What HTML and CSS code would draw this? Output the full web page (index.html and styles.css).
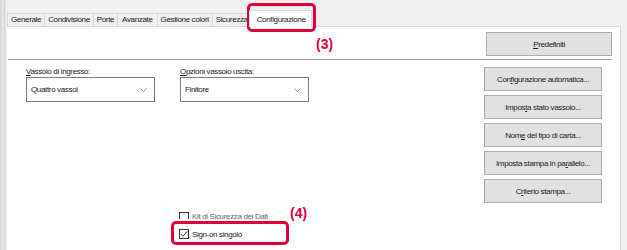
FILE: index.html
```html
<!DOCTYPE html>
<html lang="it">
<head>
    <meta charset="UTF-8">
    <title>Configurazione</title>
    <link rel="stylesheet" href="styles.css">
</head>
<body>
<div class="screen">
    <div class="edge"></div>
    <div class="sheet">
        <div class="tabs">
            <div class="tab">Generale</div>
            <div class="tab">Condivisione</div>
            <div class="tab">Porte</div>
            <div class="tab tab-mid">Avanzate</div>
            <div class="tab">Gestione colori</div>
            <div class="tab tab-cut">Sicurezza</div>
            <div class="tab active">Configurazione</div>
        </div>

        <div class="panel">
            <div class="head">
                <button class="btn btn-wide"><u>P</u>redefiniti</button>
            </div>

            <div class="body">
                <div class="left">
                    <div class="selects">
                        <div class="field">
                            <label class="label"><u>V</u>assoio di ingresso:</label>
                            <div class="select">
                                <span>Quattro vassoi</span>
                                <svg width="7" height="4" viewBox="0 0 7 4"><polyline points="0.5,0.5 3.5,3.5 6.5,0.5" fill="none" stroke="#8a8a8a" stroke-width="1"/></svg>
                            </div>
                        </div>
                        <div class="field">
                            <label class="label"><u>O</u>pzioni vassoio uscita:</label>
                            <div class="select">
                                <span>Finitore</span>
                                <svg width="7" height="4" viewBox="0 0 7 4"><polyline points="0.5,0.5 3.5,3.5 6.5,0.5" fill="none" stroke="#8a8a8a" stroke-width="1"/></svg>
                            </div>
                        </div>
                    </div>

                    <div class="checks">
                        <div class="check check-cut">
                            <span class="box"></span>
                            <span class="dim">Kit di Sicurezza dei Dati</span>
                        </div>
                        <div class="check">
                            <span class="box">
                                <svg width="8" height="8" viewBox="0 0 8 8"><polyline points="0.8,4 3,6.3 7.3,1.2" fill="none" stroke="#333" stroke-width="1"/></svg>
                            </span>
                            <span>Sign-on singolo</span>
                        </div>
                    </div>
                </div>

                <div class="right">
                    <button class="btn">Con<u>f</u>igurazione automatica...</button>
                    <button class="btn">Impos<u>t</u>a stato vassoio...</button>
                    <button class="btn">Nom<u>e</u> del tipo di carta...</button>
                    <button class="btn">Imposta stampa in pa<u>r</u>allelo...</button>
                    <button class="btn">C<u>r</u>iterio stampa...</button>
                </div>
            </div>
        </div>
    </div>

    <!-- annotazioni -->
    <div class="mark mark-tab"></div>
    <div class="num num-3">(3)</div>
    <div class="mark mark-check"></div>
    <div class="num num-4">(4)</div>
</div>
</body>
</html>
```

FILE: styles.css
```css
body { margin: 0; background: #f0f0f0; font-family: "Liberation Sans", Arial, sans-serif; font-size: 8px; letter-spacing: -0.35px; color: #1a1a1a; }
.screen { position: relative; display: flex; width: 627px; height: 250px; overflow: hidden; }
.edge { width: 7px; background: linear-gradient(to right, #cfcfcf 0, #dedede 1px, #e9e9e9 3px, #d2d2d2 5px, #f2f2f2 6px); }
.sheet { flex: 1; display: flex; flex-direction: column; }

.tabs { display: flex; align-items: flex-end; height: 26px; padding-top: 13px; box-sizing: border-box; }
.tab { height: 13px; line-height: 12px; padding: 0 3px; border: 1px solid #d9d9d9; border-bottom: none; border-right: none; background: #f0f0f0; box-sizing: border-box; white-space: nowrap; }
.tab-mid { padding: 0 4px; }
.tab-cut { width: 35px; overflow: hidden; padding-right: 0; }
.active { position: relative; z-index: 1; height: 17px; margin-bottom: -1px; margin-left: 2px; padding: 2px 5px 0 7px; line-height: 13px; background: #fff; border-right: 1px solid #d9d9d9; }

.panel { flex: 1; margin-right: 6px; background: #fff; border-top: 1px solid #d9d9d9; border-right: 1px solid #d9d9d9; }
.head { display: flex; justify-content: flex-end; align-items: flex-start; height: 33px; margin: 0 8px 0 1px; padding-top: 5px; box-sizing: border-box; border-bottom: 1px solid #a0a0a0; }

.btn { display: block; width: 118px; height: 24px; padding: 0; background: #e1e1e1; border: 1px solid #adadad; font-family: inherit; font-size: 8px; letter-spacing: -0.35px; color: #1a1a1a; text-align: center; }
.btn-wide { width: 126px; }

.body { display: flex; justify-content: space-between; padding: 7px 18px 0 19px; }
.selects { display: flex; gap: 25px; }
.label { display: block; height: 10px; line-height: 9px; }
.select { display: flex; align-items: center; justify-content: space-between; width: 129px; height: 25px; padding: 0 7px 0 4px; border: 1px solid #7a7a7a; box-sizing: border-box; }

.checks { margin: 110px 0 0 153px; }
.check { display: flex; align-items: center; gap: 3px; height: 10px; white-space: nowrap; }
.check-cut { height: 7px; overflow: hidden; align-items: flex-start; margin-bottom: 10px; }
.box { display: flex; align-items: center; justify-content: center; width: 10px; height: 10px; border: 1px solid #333; box-sizing: border-box; background: #fff; flex: none; }
.dim { color: #666; line-height: 10px; }

.right { display: flex; flex-direction: column; gap: 4px; }

.mark { position: absolute; border: 3px solid #e0003c; border-radius: 5px; box-sizing: border-box; }
.mark-tab { left: 247px; top: 3px; width: 69px; height: 29px; }
.mark-check { left: 171px; top: 221px; width: 118px; height: 24px; }
.num { position: absolute; color: #e0003c; font-size: 14px; font-weight: bold; letter-spacing: 0; line-height: 16px; }
.num-3 { left: 316px; top: 36px; }
.num-4 { left: 290px; top: 205px; }
```
